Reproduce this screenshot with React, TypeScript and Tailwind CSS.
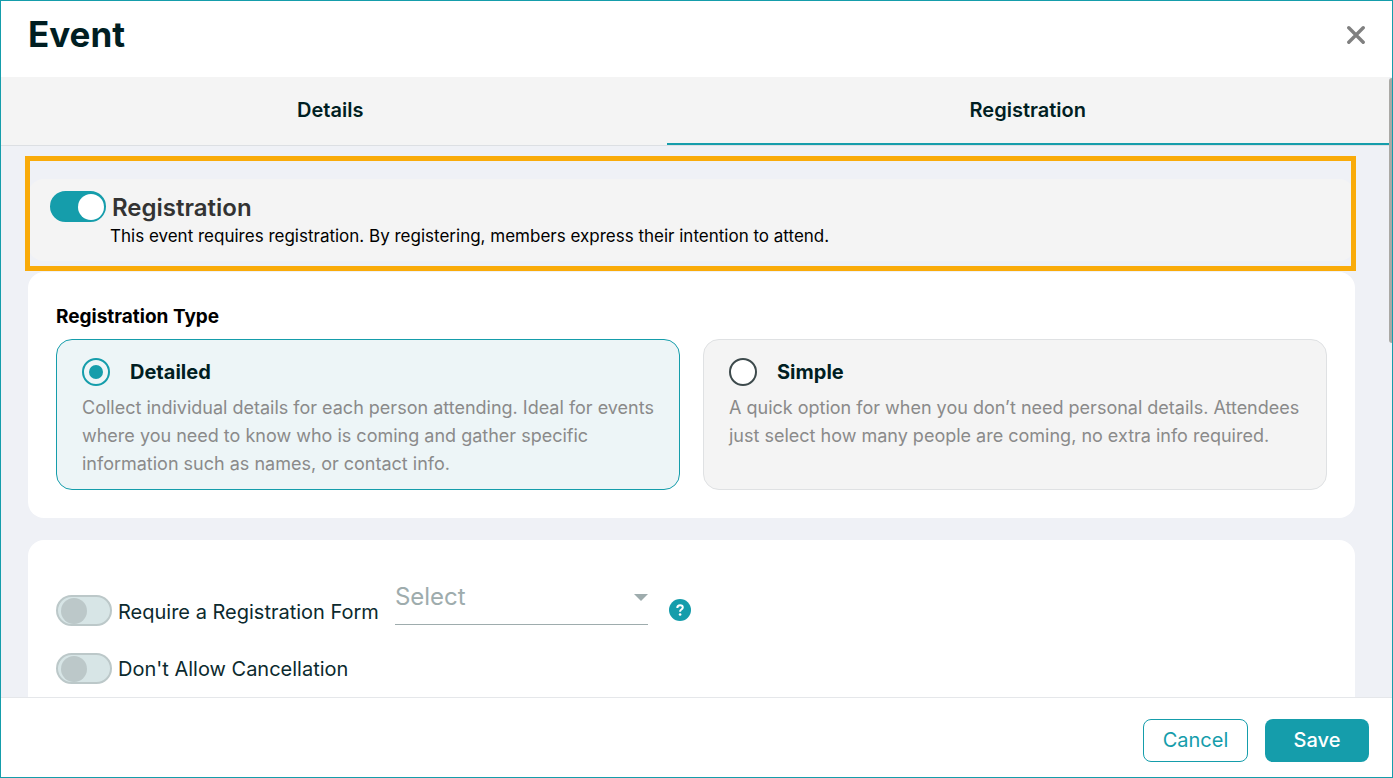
import { useState } from "react";
import clsx from "clsx";

type RegistrationType = "detailed" | "simple";

const TABS = ["Details", "Registration"];

const REGISTRATION_TYPES: {
  value: RegistrationType;
  label: string;
  description: string;
}[] = [
  {
    value: "detailed",
    label: "Detailed",
    description:
      "Collect individual details for each person attending. Ideal for events where you need to know who is coming and gather specific information such as names, or contact info.",
  },
  {
    value: "simple",
    label: "Simple",
    description:
      "A quick option for when you don’t need personal details. Attendees just select how many people are coming, no extra info required.",
  },
];

function Toggle({
  id,
  checked,
  onChange,
}: {
  id: string;
  checked: boolean;
  onChange: (checked: boolean) => void;
}) {
  return (
    <span
      className={clsx(
        "relative flex h-[31px] w-14 shrink-0 items-center rounded-full border-2",
        checked
          ? "justify-end border-[#159dab] bg-[#159dab]"
          : "justify-start border-[#bcc8c9] bg-[#d7e5e6] px-[3px]"
      )}
    >
      <input
        id={id}
        type="checkbox"
        role="switch"
        checked={checked}
        onChange={(e) => onChange(e.target.checked)}
        className="absolute inset-0 cursor-pointer appearance-none"
      />
      <span
        className={clsx(
          "pointer-events-none size-[26px] rounded-full",
          checked ? "bg-white" : "bg-[#bcc8c9]"
        )}
      />
    </span>
  );
}

function TypeOption({
  value,
  label,
  description,
  selected,
  onSelect,
}: {
  value: RegistrationType;
  label: string;
  description: string;
  selected: boolean;
  onSelect: (value: RegistrationType) => void;
}) {
  return (
    <label
      className={clsx(
        "flex cursor-pointer flex-col gap-2 rounded-2xl border pt-[18px] pr-3 pb-[11px] pl-[25px]",
        selected
          ? "border-[#159dab] bg-[#edf5f7]"
          : "border-[#dfe1e3] bg-[#f4f4f4]"
      )}
    >
      <span className="flex items-center gap-5">
        <input
          type="radio"
          name="registration-type"
          value={value}
          checked={selected}
          onChange={() => onSelect(value)}
          className="grid size-7 appearance-none place-items-center rounded-full border-2 border-[#3d4a4c] bg-white before:size-3.5 before:rounded-full checked:border-[#159dab] checked:bg-transparent checked:before:bg-[#159dab]"
        />
        <span className="text-xl font-bold text-[#001e22]">{label}</span>
      </span>
      <span className="text-lg leading-7 text-[#8a8a8a]">{description}</span>
    </label>
  );
}

export default function App() {
  const [tab, setTab] = useState("Registration");
  const [required, setRequired] = useState(true);
  const [type, setType] = useState<RegistrationType>("detailed");
  const [requireForm, setRequireForm] = useState(false);
  const [noCancel, setNoCancel] = useState(false);

  return (
    <div className="flex h-screen flex-col overflow-hidden border border-[#159dab] bg-white font-['Inter',sans-serif]">
      {/* Header */}
      <header className="flex h-19 shrink-0 items-center justify-between pr-[23px] pb-[9px] pl-[27px]">
        <h1 className="text-[35px] font-bold text-[#001e22]">Event</h1>
        <button type="button" aria-label="Close" className="p-1 text-[#808080]">
          <svg viewBox="0 0 18 18" className="size-[18px]" fill="none">
            <path
              d="M1.8 1.8l14.4 14.4M16.2 1.8L1.8 16.2"
              stroke="currentColor"
              strokeWidth="3.4"
              strokeLinecap="round"
            />
          </svg>
        </button>
      </header>

      <main className="relative flex min-h-0 flex-1 flex-col overflow-hidden bg-[#eff1f6]">
        {/* Tabs */}
        <nav className="mr-[3px] -ml-[7px] flex h-[69px] shrink-0 border-b border-[#dcdfe3] bg-[#f4f4f4]">
          {TABS.map((name) => (
            <button
              key={name}
              type="button"
              onClick={() => setTab(name)}
              className={clsx(
                "flex-auto border-b-2 text-xl font-semibold text-[#001e22]",
                tab === name ? "border-[#159dab]" : "border-transparent"
              )}
            >
              {name}
            </button>
          ))}
        </nav>

        {/* Scroll thumb */}
        <div className="absolute top-px right-0 h-[265px] w-[3px] rounded-l-sm bg-[#aaa9a5]" />

        <div className="flex min-h-0 flex-1 flex-col pt-[33px] pr-[37px] pl-[27px]">
          <section className="relative mb-[11px] flex h-[82px] shrink-0 gap-1 rounded-2xl bg-[#f4f4f4] pt-3 pl-[22px]">
            {/* Highlight frame */}
            <div className="pointer-events-none absolute -top-[23px] -right-px -bottom-2.5 -left-[3px] border-5 border-[#f9ab0a]" />
            <Toggle id="required" checked={required} onChange={setRequired} />
            <div>
              <label
                htmlFor="required"
                className="block pl-0.5 text-2xl leading-[34px] font-semibold text-[#333]"
              >
                Registration
              </label>
              <p className="text-[17px] leading-[22px] text-black">
                This event requires registration. By registering, members
                express their intention to attend.
              </p>
            </div>
          </section>

          <section className="mb-[22px] shrink-0 rounded-2xl bg-white p-7">
            <h2 className="mb-[5px] text-[19px] leading-[34px] font-bold text-black">
              Registration Type
            </h2>
            <div className="grid grid-cols-2 gap-[23px]">
              {REGISTRATION_TYPES.map((option) => (
                <TypeOption
                  key={option.value}
                  {...option}
                  selected={type === option.value}
                  onSelect={setType}
                />
              ))}
            </div>
          </section>

          <section className="flex shrink-0 flex-col gap-[27px] rounded-t-2xl bg-white px-7 pt-[29px] pb-7">
            <div className="flex items-end">
              <Toggle
                id="require-form"
                checked={requireForm}
                onChange={setRequireForm}
              />
              <label
                htmlFor="require-form"
                className="ml-1.5 text-xl leading-7 text-[#0c2a2e]"
              >
                Require a Registration Form
              </label>
              <div className="relative mb-px ml-4 w-[253px]">
                <select
                  aria-label="Registration form"
                  defaultValue=""
                  className="block h-14 w-full appearance-none border-b border-[#9eacad] bg-transparent text-2xl text-[#9eacad]"
                >
                  <option value="">Select</option>
                </select>
                <svg
                  viewBox="0 0 14 7"
                  className="pointer-events-none absolute top-[25px] right-0 h-[7px] w-3.5 fill-[#9eacad]"
                >
                  <path d="M0 0h14L7 7z" />
                </svg>
              </div>
              <button
                type="button"
                aria-label="Help"
                className="mb-[5px] ml-[21px] size-[22px] rounded-full text-white"
              >
                <svg viewBox="0 0 22 22" className="size-[22px]" fill="none">
                  <circle cx="11" cy="11" r="11" fill="#159dab" />
                  <path
                    d="M8.3 8.9c0-1.7 1.2-2.6 2.8-2.6s2.7 1 2.7 2.3c0 1.9-2.7 2-2.7 3.8v.3"
                    stroke="currentColor"
                    strokeWidth="2"
                  />
                  <circle cx="11.1" cy="15.5" r="1.3" fill="currentColor" />
                </svg>
              </button>
            </div>
            <div className="flex items-center">
              <Toggle id="no-cancel" checked={noCancel} onChange={setNoCancel} />
              <label
                htmlFor="no-cancel"
                className="ml-1.5 text-xl text-[#0c2a2e]"
              >
                Don't Allow Cancellation
              </label>
            </div>
          </section>
        </div>
      </main>

      {/* Footer */}
      <footer className="flex shrink-0 justify-end gap-[17px] border-t border-[#e5e7ea] pt-[21px] pr-[23px] pb-[15px] text-xl">
        <button
          type="button"
          className="h-[43px] w-[105px] rounded-lg border border-[#159dab] pb-0.5 text-[#159dab]"
        >
          Cancel
        </button>
        <button
          type="button"
          className="h-[43px] w-[104px] rounded-lg bg-[#159dab] pb-0.5 font-medium text-white"
        >
          Save
        </button>
      </footer>
    </div>
  );
}
